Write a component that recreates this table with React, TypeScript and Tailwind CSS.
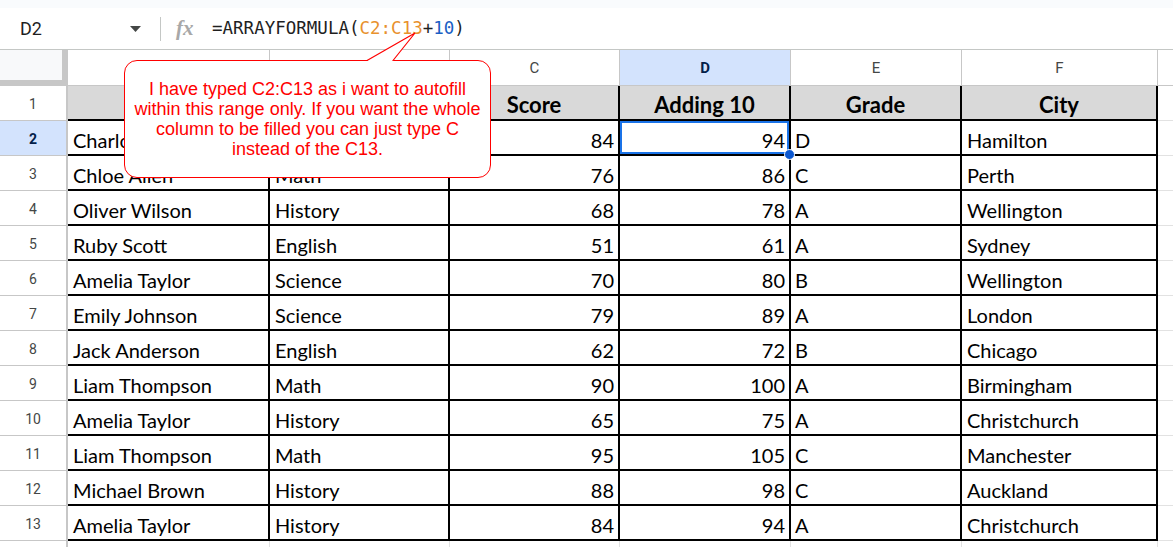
import React from 'react';

type Row = {
  name: string;
  subject: string;
  score: number;
  plus: number;
  grade: string;
  city: string;
};

const rows: Row[] = [
  { name: 'Charlotte King', subject: 'Math', score: 84, plus: 94, grade: 'D', city: 'Hamilton' },
  { name: 'Chloe Allen', subject: 'Math', score: 76, plus: 86, grade: 'C', city: 'Perth' },
  { name: 'Oliver Wilson', subject: 'History', score: 68, plus: 78, grade: 'A', city: 'Wellington' },
  { name: 'Ruby Scott', subject: 'English', score: 51, plus: 61, grade: 'A', city: 'Sydney' },
  { name: 'Amelia Taylor', subject: 'Science', score: 70, plus: 80, grade: 'B', city: 'Wellington' },
  { name: 'Emily Johnson', subject: 'Science', score: 79, plus: 89, grade: 'A', city: 'London' },
  { name: 'Jack Anderson', subject: 'English', score: 62, plus: 72, grade: 'B', city: 'Chicago' },
  { name: 'Liam Thompson', subject: 'Math', score: 90, plus: 100, grade: 'A', city: 'Birmingham' },
  { name: 'Amelia Taylor', subject: 'History', score: 65, plus: 75, grade: 'A', city: 'Christchurch' },
  { name: 'Liam Thompson', subject: 'Math', score: 95, plus: 105, grade: 'C', city: 'Manchester' },
  { name: 'Michael Brown', subject: 'History', score: 88, plus: 98, grade: 'C', city: 'Auckland' },
  { name: 'Amelia Taylor', subject: 'History', score: 84, plus: 94, grade: 'A', city: 'Christchurch' },
];

const cols = 'grid grid-cols-[68px_202px_180px_170px_171px_171px_196px_1fr]';
const cellBase = 'h-[35px] border-r-2 border-b-2 border-black flex items-center text-black whitespace-nowrap overflow-hidden';
const cell = cellBase + ' pt-[5px] text-[20px]';
const rowHead = 'h-[35px] border-r-2 border-b border-[#c7c7c7] bg-white flex items-center justify-center pt-[3px] text-[14px] text-[#444746] font-["Roboto",sans-serif]';
const colHead = 'h-[36px] border-r border-b border-[#c7c7c7] bg-white flex items-center justify-center pt-[1px] text-[15px] text-[#444746] font-["Roboto",sans-serif]';

export default function App() {
  return (
    <div className="relative w-[1173px] h-[547px] overflow-hidden bg-white font-['Lato',sans-serif]">
      <div className="h-[8px] bg-[#f9fbfd]" />

      {/* formula bar */}
      <div className="flex items-center h-[42px] border-b border-[#c4c7c5]">
        <div className="w-[160px] flex items-center justify-between pl-[20px] pr-[19px]">
          <span className="text-[18px] text-[#1f1f1f] font-['Roboto',sans-serif]">D2</span>
          <svg width="11" height="6" viewBox="0 0 11 6">
            <polygon points="0,0 11,0 5.5,6" fill="#444746" />
          </svg>
        </div>
        <div className="w-px h-[24px] bg-[#c4c7c5]" />
        <span className="ml-[15px] w-[36px] text-[21px] italic font-bold text-[#a8a8a8] font-['Liberation_Serif',serif] leading-none">
          fx
        </span>
        <span className="text-[17.5px] text-[#1f1f1f] font-['DejaVu_Sans_Mono',monospace]">
          =ARRAYFORMULA(<span className="text-[#e8912d]">C2:C13</span>+<span className="text-[#1a5fc4]">10</span>)
        </span>
      </div>

      {/* column headers */}
      <div className={cols}>
        <div className="h-[36px] bg-[#f8f9fa] border-r-[6px] border-b-[6px] border-[#c7c7c7]" />
        {['A', 'B', 'C'].map((c) => (
          <div key={c} className={colHead}>{c}</div>
        ))}
        <div className={colHead + ' !bg-[#d3e3fd] font-bold !text-[#041e49]'}>D</div>
        {['E', 'F'].map((c) => (
          <div key={c} className={colHead}>{c}</div>
        ))}
        <div className="h-[36px] border-b border-[#c7c7c7] bg-white" />
      </div>

      {/* header row (Name / Subject sit under the comment) */}
      <div className={cols}>
        <div className={rowHead}>1</div>
        {['', '', 'Score', 'Adding 10', 'Grade', 'City'].map((h, k) => (
          <div key={k} className={cellBase + ' pt-[3px] justify-center bg-[#d9d9d9] font-bold text-[22px]'}>{h}</div>
        ))}
        <div className="h-[35px] border-b border-[#e2e2e2]" />
      </div>

      {rows.map((r, i) => {
        const n = i + 2;
        const sel = n === 2;
        return (
          <div key={n} className={cols}>
            <div className={rowHead + (sel ? ' !bg-[#d3e3fd] font-bold !text-[#041e49]' : '')}>{n}</div>
            <div className={cell + ' pl-[5px]'}>{r.name}</div>
            <div className={cell + ' pl-[5px]'}>{r.subject}</div>
            <div className={cell + ' justify-end pr-[4px]'}>{r.score}</div>
            <div className={cell + ' justify-end pr-[4px] relative overflow-visible'}>
              {r.plus}
              {sel && (
                <>
                  <div className="absolute inset-0 border-2 border-[#1a73e8] pointer-events-none" />
                  <div className="absolute right-[-6px] bottom-[-6px] w-[11px] h-[11px] rounded-full bg-[#0b57d0] border border-white z-10" />
                </>
              )}
            </div>
            <div className={cell + ' pl-[4px]'}>{r.grade}</div>
            <div className={cell + ' pl-[5px]'}>{r.city}</div>
            <div className="h-[35px] border-b border-[#e2e2e2]" />
          </div>
        );
      })}

      <div className={cols}>
        <div className="h-[35px] border-r-2 border-[#c7c7c7]" />
        {[0, 1, 2, 3, 4, 5].map((k) => (
          <div key={k} className="h-[35px] border-r border-[#e2e2e2]" />
        ))}
        <div />
      </div>

      {/* comment callout */}
      <div className="absolute left-[124px] top-[60px] w-[367px] h-[118px] rounded-[13px] border-[1.5px] border-[#ff0000] bg-white flex flex-col items-center justify-center text-center text-[#ff0000] text-[18px] leading-[20px] font-['Liberation_Sans',Arial,sans-serif]">
        <span className="whitespace-nowrap">I have typed C2:C13 as i want to autofill</span>
        <span className="whitespace-nowrap">within this range only. If you want the whole</span>
        <span className="whitespace-nowrap">column to be filled you can just type C</span>
        <span className="whitespace-nowrap">instead of the C13.</span>
      </div>
      <svg className="absolute left-[360px] top-[30px]" width="60" height="33" viewBox="0 0 60 33">
        <polygon points="7,30.5 55,3 33,30.5" fill="white" stroke="none" />
        <rect x="8" y="29" width="24" height="4" fill="white" />
        <polyline points="7,30.5 55,3 33,30.5" fill="none" stroke="#ff0000" strokeWidth="1.2" />
      </svg>
    </div>
  );
}
